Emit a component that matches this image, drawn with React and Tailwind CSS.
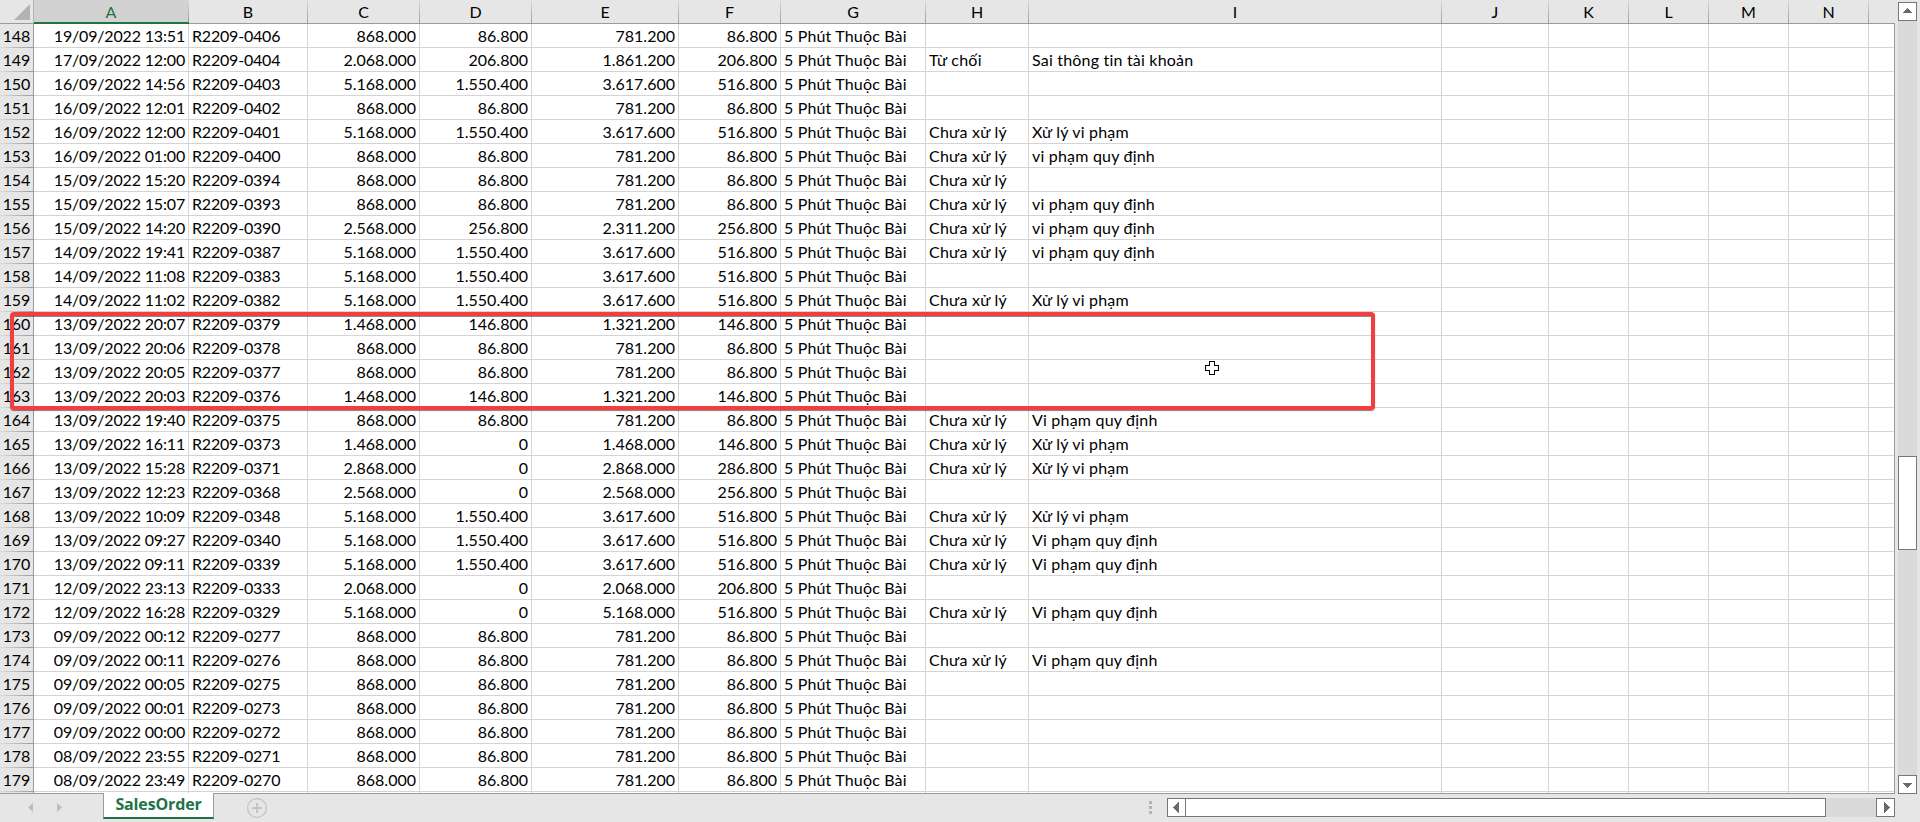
import React from "react";

const COLS =
  "grid grid-cols-[155px_119px_112px_112px_147px_102px_145px_103px_413px_107px_80px_80px_80px_80px_26px]";

const LETTERS = ["A", "B", "C", "D", "E", "F", "G", "H", "I", "J", "K", "L", "M", "N", ""];

const CXL = "Chưa xử lý";
const XL = "Xử lý vi phạm";
const VP = "Vi phạm quy định";
const vp = "vi phạm quy định";

const P1 = ["868.000", "86.800", "781.200", "86.800"];
const P2 = ["5.168.000", "1.550.400", "3.617.600", "516.800"];
const P3 = ["1.468.000", "146.800", "1.321.200", "146.800"];

const ROWS = [
  ["19/09/2022 13:51", "0406", P1],
  ["17/09/2022 12:00", "0404", ["2.068.000", "206.800", "1.861.200", "206.800"], "Từ chối", "Sai thông tin tài khoản"],
  ["16/09/2022 14:56", "0403", P2],
  ["16/09/2022 12:01", "0402", P1],
  ["16/09/2022 12:00", "0401", P2, CXL, XL],
  ["16/09/2022 01:00", "0400", P1, CXL, vp],
  ["15/09/2022 15:20", "0394", P1, CXL],
  ["15/09/2022 15:07", "0393", P1, CXL, vp],
  ["15/09/2022 14:20", "0390", ["2.568.000", "256.800", "2.311.200", "256.800"], CXL, vp],
  ["14/09/2022 19:41", "0387", P2, CXL, vp],
  ["14/09/2022 11:08", "0383", P2],
  ["14/09/2022 11:02", "0382", P2, CXL, XL],
  ["13/09/2022 20:07", "0379", P3],
  ["13/09/2022 20:06", "0378", P1],
  ["13/09/2022 20:05", "0377", P1],
  ["13/09/2022 20:03", "0376", P3],
  ["13/09/2022 19:40", "0375", P1, CXL, VP],
  ["13/09/2022 16:11", "0373", ["1.468.000", "0", "1.468.000", "146.800"], CXL, XL],
  ["13/09/2022 15:28", "0371", ["2.868.000", "0", "2.868.000", "286.800"], CXL, XL],
  ["13/09/2022 12:23", "0368", ["2.568.000", "0", "2.568.000", "256.800"]],
  ["13/09/2022 10:09", "0348", P2, CXL, XL],
  ["13/09/2022 09:27", "0340", P2, CXL, VP],
  ["13/09/2022 09:11", "0339", P2, CXL, VP],
  ["12/09/2022 23:13", "0333", ["2.068.000", "0", "2.068.000", "206.800"]],
  ["12/09/2022 16:28", "0329", ["5.168.000", "0", "5.168.000", "516.800"], CXL, VP],
  ["09/09/2022 00:12", "0277", P1],
  ["09/09/2022 00:11", "0276", P1, CXL, VP],
  ["09/09/2022 00:05", "0275", P1],
  ["09/09/2022 00:01", "0273", P1],
  ["09/09/2022 00:00", "0272", P1],
  ["08/09/2022 23:55", "0271", P1],
  ["08/09/2022 23:49", "0270", P1],
];

function Cell({ right, children, last, tracking = "" }) {
  return (
    <div
      className={
        "h-full overflow-hidden whitespace-nowrap border-b border-[#d4d4d4] px-[3px] leading-[23px] " +
        (last ? "" : "border-r ") +
        (right ? "text-right " : "text-left ") +
        tracking
      }
    >
      {children}
    </div>
  );
}

function Row({ row, number }) {
  const [date, id, nums, status, note] = row;
  return (
    <div className="flex h-6">
      <div className="flex w-[34px] shrink-0 flex-col border-r border-[#9b9b9b] bg-[#e6e6e6]">
        <div className="h-[23px] pr-[3px] text-right leading-[23px] tracking-[-0.2px]">{number}</div>
        <div className="h-px bg-linear-to-r from-[#dcdcdc] to-[#9b9b9b]" />
      </div>
      <div className={COLS + " h-6"}>
        <Cell right tracking="tracking-[-0.17px]">{date}</Cell>
        <Cell tracking="tracking-[-0.2px]">R2209-{id}</Cell>
        {nums.map((n, i) => (
          <Cell right key={i}>{n}</Cell>
        ))}
        <Cell tracking="tracking-[0.16px]">5 Phút Thuộc Bài</Cell>
        <Cell tracking="tracking-[0.25px]">{status}</Cell>
        <Cell tracking="tracking-[0.2px]">{note}</Cell>
        <Cell /><Cell /><Cell /><Cell /><Cell />
        <Cell last />
      </div>
    </div>
  );
}

function ArrowButton({ d }) {
  return (
    <div className="size-[19px] shrink-0 border border-[#777] bg-white">
      <svg viewBox="0 0 17 17" className="size-[17px]" shapeRendering="crispEdges">
        <path d={d} fill="#6a6a6a" />
      </svg>
    </div>
  );
}

export default function App() {
  return (
    <div className="relative flex h-[822px] w-[1920px] flex-col overflow-hidden bg-[#e6e6e6] font-['Lato','Noto_Sans',sans-serif] text-[16px] text-black">
      <div className="flex h-[794px]">
        <div className="flex h-[794px] w-[1895px] flex-col border-b border-[#9b9b9b]">
          <div className="flex h-6 shrink-0">
            <div className="h-6 w-[34px] border-b border-[#9b9b9b]">
              <svg viewBox="0 0 34 23" className="h-[23px] w-[34px]">
                <path d="M30 4V20H14Z" fill="#b3b3b3" />
                <path d="M33.5 0V23" stroke="#b5b5b5" />
              </svg>
            </div>
            <div className={COLS + " h-6"}>
              {LETTERS.map((l, i) => (
                <div
                  key={i}
                  className={
                    "flex h-6 " +
                    (i === 0
                      ? "border-b-2 border-[#217346] bg-[#d2d2d2] text-[#217346]"
                      : "border-b border-[#9b9b9b]")
                  }
                >
                  <div className="flex-1 text-center leading-[23px]">{l}</div>
                  {i < 14 && <div className="w-px bg-linear-to-b from-[#dcdcdc] to-[#9b9b9b]" />}
                </div>
              ))}
            </div>
          </div>
          <div className="flex flex-1 flex-col overflow-hidden border-r border-[#9b9b9b] bg-white">
            {ROWS.map((r, i) => (
              <Row key={i} row={r} number={148 + i} />
            ))}
            <div className="flex flex-1">
              <div className="w-[34px] shrink-0 border-r border-[#9b9b9b] bg-[#e6e6e6]" />
              <div className={COLS}>
                {LETTERS.map((l, i) => (
                  <div key={i} className={i < 14 ? "border-r border-[#d4d4d4]" : ""} />
                ))}
              </div>
            </div>
          </div>
        </div>
        <div className="ml-[3px] mt-[2px] flex h-[792px] w-[19px] flex-col bg-[#dadada]">
          <ArrowButton d="M4 10H13V9H12V8H11V7H10V6H9V5H8V6H7V7H6V8H5V9H4Z" />
          <div className="mt-[435px] h-[94px] border border-[#777] bg-white" />
          <div className="flex-1" />
          <ArrowButton d="M4 7H13V8H12V9H11V10H10V11H9V12H8V11H7V10H6V9H5V8H4Z" />
        </div>
      </div>

      <div className="flex h-7">
        <svg viewBox="0 0 103 28" className="h-7 w-[103px]">
          <path d="M33 9V18L28 13.5Z" fill="#bdbdbd" />
          <path d="M57 9V18L62 13.5Z" fill="#bdbdbd" />
        </svg>
        <div className="-mt-px h-[26px] w-[111px] border-x border-b-2 border-x-[#9b9b9b] border-b-[#217346] bg-white text-center font-['Open_Sans','Noto_Sans',sans-serif] text-[16px] font-bold leading-[22px] tracking-[-0.15px] text-[#217346]">
          SalesOrder
        </div>
        <svg viewBox="0 0 22 22" className="ml-[32px] mt-[3px] size-[22px]" fill="none" stroke="#c3c3c3">
          <circle cx="11" cy="11" r="9.4" strokeWidth="1.2" />
          <path d="M6 11H16M11 6V16" strokeWidth="2" />
        </svg>
        <div className="ml-auto mt-[7px] flex w-[2px] flex-col gap-[2px]">
          <div className="h-[3px] w-[3px] bg-[#b3b3b3]" />
          <div className="h-[3px] w-[3px] bg-[#b3b3b3]" />
          <div className="h-[3px] w-[3px] bg-[#b3b3b3]" />
        </div>
        <div className="ml-4 mr-[25px] mt-1 flex h-[19px] w-[728px] bg-[#dadada]">
          <ArrowButton d="M11 3V14H10V13H9V12H8V11H7V10H6V9H5V8H6V7H7V6H8V5H9V4H10V3Z" />
          <div className="-ml-px h-[19px] w-[641px] border border-[#777] bg-white" />
          <div className="flex-1" />
          <ArrowButton d="M7 3V14H8V13H9V12H10V11H11V10H12V9H13V8H12V7H11V6H10V5H9V4H8V3Z" />
        </div>
      </div>

      <div className="absolute left-[10px] top-[312px] h-[98px] w-[1365px] rounded-[4px] border-4 border-[#f43d3d] shadow-[0_1px_1px_rgba(0,0,0,0.5),inset_0_1px_0_rgba(0,0,0,0.45)]" />
      <svg viewBox="0 0 14 14" className="absolute left-[1205px] top-[361px] size-[14px]" shapeRendering="crispEdges">
        <path d="M4.5 .5H9.5V4.5H13.5V9.5H9.5V13.5H4.5V9.5H.5V4.5H4.5Z" fill="#fff" stroke="#000" />
      </svg>
    </div>
  );
}
